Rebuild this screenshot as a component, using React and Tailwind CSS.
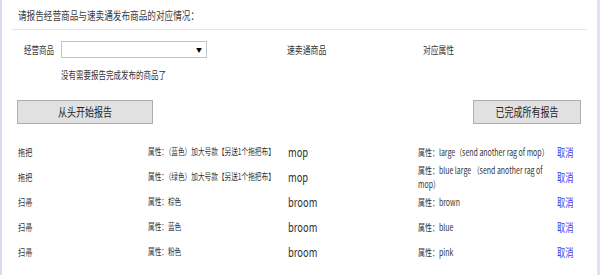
import React from 'react';

const FONT = { fontFamily: '"Noto Sans CJK SC", "Liberation Sans", sans-serif' };

const rows = [
  { name: '拖把', attr: '属性：（蓝色）加大号款【另送1个拖把布】', product: 'mop', target: '属性：large（send another rag of mop）' },
  { name: '拖把', attr: '属性：（绿色）加大号款【另送1个拖把布】', product: 'mop', target: '属性：blue large （send another rag of mop）' },
  { name: '扫帚', attr: '属性：棕色', product: 'broom', target: '属性：brown' },
  { name: '扫帚', attr: '属性：蓝色', product: 'broom', target: '属性：blue' },
  { name: '扫帚', attr: '属性：粉色', product: 'broom', target: '属性：pink' },
];

// the source page renders with a narrow font, so squeeze text horizontally
function Narrow({ className = '', children }) {
  return (
    <span className={'block origin-left scale-x-75 whitespace-nowrap ' + className}>{children}</span>
  );
}

export default function App() {
  return (
    <div
      className="w-[600px] h-[275px] overflow-hidden bg-white text-[#333] border-l-2 border-r-[3px] border-l-[#dddaf0] border-r-[#e2e0f4]"
      style={FONT}
    >
      <div className="h-[29px] flex items-center pl-[16px]">
        <Narrow className="text-[11.5px] leading-[14px] text-[#3a3a3a]">请报告经营商品与速卖通发布商品的对应情况：</Narrow>
      </div>
      <div className="ml-[10px] mr-[10px] h-px bg-[#e4e4e4]" />

      <div className="mt-[11px] flex items-center h-[17px]">
        <div className="ml-[22px] w-[37px] flex items-center">
          <Narrow className="text-[10px] leading-[12px]">经营商品</Narrow>
        </div>
        <div className="w-[146px] h-[17px] border border-[#c4c4c4] bg-white flex items-center justify-end pr-[4px]">
          <span className="text-[6px] leading-none text-black">▼</span>
        </div>
        <div className="ml-[80px] w-[136px] flex items-center">
          <Narrow className="text-[10.5px] leading-[12px]">速卖通商品</Narrow>
        </div>
        <div className="flex items-center">
          <Narrow className="text-[10.3px] leading-[12px]">对应属性</Narrow>
        </div>
      </div>

      <div className="ml-[59px] mt-[10px] h-[14px] flex items-center">
        <Narrow className="text-[10px] leading-[12px]">没有需要报告完成发布的商品了</Narrow>
      </div>

      <div className="mt-[18px] flex justify-between pl-[15px] pr-[16px]">
        <button className="w-[136px] h-[24px] bg-[#e1e1e1] border border-[#adadad] flex items-center justify-center">
          <span className="block scale-x-75 whitespace-nowrap text-[12px] leading-[14px] text-[#222]">从头开始报告</span>
        </button>
        <button className="w-[108px] h-[24px] bg-[#e1e1e1] border border-[#adadad] flex items-center justify-center">
          <span className="block scale-x-75 whitespace-nowrap text-[12px] leading-[14px] text-[#222]">已完成所有报告</span>
        </button>
      </div>

      <div className="mt-[15px]">
        {rows.map((r, i) => (
          <div key={i} className="h-[25px] flex items-center pl-[16px]">
            <div className="w-[130px] flex items-center">
              <Narrow className="text-[9.5px] leading-[12px]">{r.name}</Narrow>
            </div>
            <div className="w-[140px] flex items-center">
              <Narrow className="text-[8.9px] leading-[12px]">{r.attr}</Narrow>
            </div>
            <div className="w-[130px] flex items-center">
              <Narrow className="text-[12.5px] leading-[14px]">{r.product}</Narrow>
            </div>
            <div className="w-[139px] flex items-center">
              <span className="block w-[180px] shrink-0 origin-left scale-x-75 text-[9.3px] leading-[14px]">{r.target}</span>
            </div>
            <div className="flex items-center">
              <Narrow className="text-[11px] leading-[12px] text-[#3a3af2]">取消</Narrow>
            </div>
          </div>
        ))}
      </div>
    </div>
  );
}
